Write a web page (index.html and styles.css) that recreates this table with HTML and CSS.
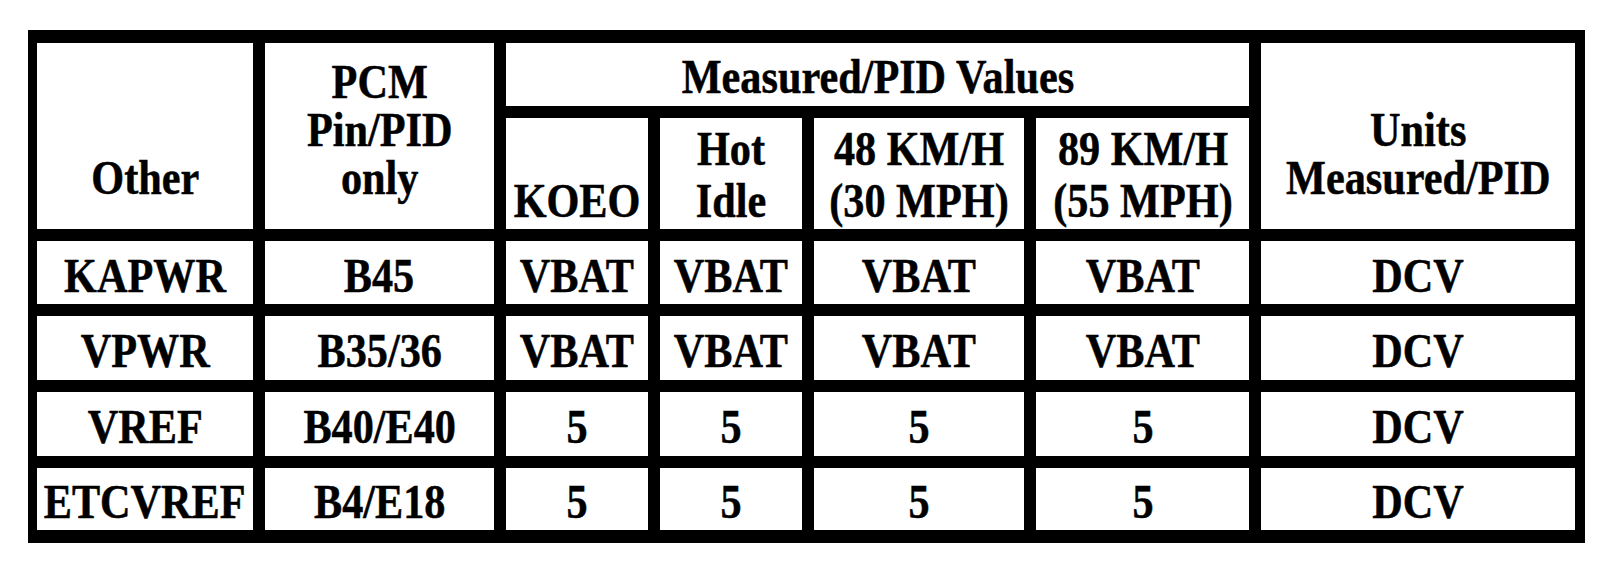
FILE: index.html
```html
<!DOCTYPE html>
<html lang="en">
<head>
<meta charset="utf-8">
<title>PCM Measured/PID Values</title>
<link rel="stylesheet" href="styles.css">
</head>
<body>
<div class="page">
  <div class="grid">
    <div class="cell hd hd-other"><span class="t">Other</span></div>
    <div class="cell hd hd-pcm"><span class="t">PCM<br>Pin/PID<br>only</span></div>
    <div class="cell hd-group"><span class="t">Measured/PID Values</span></div>
    <div class="cell hd hd-units"><span class="t">Units<br>Measured/PID</span></div>
    <div class="cell sub"><span class="t">KOEO</span></div>
    <div class="cell sub"><span class="t">Hot<br>Idle</span></div>
    <div class="cell sub"><span class="t">48 KM/H<br>(30 MPH)</span></div>
    <div class="cell sub"><span class="t">89 KM/H<br>(55 MPH)</span></div>

    <div class="cell row"><span class="t">KAPWR</span></div>
    <div class="cell row"><span class="t">B45</span></div>
    <div class="cell row"><span class="t">VBAT</span></div>
    <div class="cell row"><span class="t">VBAT</span></div>
    <div class="cell row"><span class="t">VBAT</span></div>
    <div class="cell row"><span class="t">VBAT</span></div>
    <div class="cell row"><span class="t">DCV</span></div>

    <div class="cell row"><span class="t">VPWR</span></div>
    <div class="cell row"><span class="t">B35/36</span></div>
    <div class="cell row"><span class="t">VBAT</span></div>
    <div class="cell row"><span class="t">VBAT</span></div>
    <div class="cell row"><span class="t">VBAT</span></div>
    <div class="cell row"><span class="t">VBAT</span></div>
    <div class="cell row"><span class="t">DCV</span></div>

    <div class="cell row"><span class="t">VREF</span></div>
    <div class="cell row"><span class="t">B40/E40</span></div>
    <div class="cell row"><span class="t">5</span></div>
    <div class="cell row"><span class="t">5</span></div>
    <div class="cell row"><span class="t">5</span></div>
    <div class="cell row"><span class="t">5</span></div>
    <div class="cell row"><span class="t">DCV</span></div>

    <div class="cell row"><span class="t">ETCVREF</span></div>
    <div class="cell row"><span class="t">B4/E18</span></div>
    <div class="cell row"><span class="t">5</span></div>
    <div class="cell row"><span class="t">5</span></div>
    <div class="cell row"><span class="t">5</span></div>
    <div class="cell row"><span class="t">5</span></div>
    <div class="cell row"><span class="t">DCV</span></div>
  </div>
</div>
</body>
</html>
```
FILE: styles.css
```css
html, body {
  margin: 0;
  padding: 0;
  background: #fff;
}

.page {
  padding: 30px 0 0 28px;
}

.grid {
  display: grid;
  width: fit-content;
  background: #000;
  padding: 13px 10px 13px 9px;
  column-gap: 12px;
  row-gap: 12px;
  grid-template-columns: 216px 229px 142px 142px 210px 213px 314px;
  grid-template-rows: 63px 111px 63px 64px 64px 62px;
  font-family: "Liberation Serif", "Times New Roman", serif;
  font-weight: bold;
  font-size: 48px;
  color: #000;
}

.cell {
  background: #fff;
  display: flex;
  flex-direction: column;
  align-items: center;
  justify-content: center;
  min-width: 0;
}

.t {
  display: inline-block;
  white-space: nowrap;
  text-align: center;
  line-height: 48px;
  transform: scaleX(0.88);
  -webkit-text-stroke: 0.5px #000;
}

.hd {
  grid-row: 1 / 3;
  justify-content: flex-end;
  padding-bottom: 27px;
}

.hd-other { grid-column: 1; }
.hd-pcm { grid-column: 2; }
.hd-units { grid-column: 7; }

.hd-group {
  grid-column: 3 / 7;
  grid-row: 1;
  padding-top: 5px;
}

.sub {
  grid-row: 2;
  justify-content: flex-end;
  padding-bottom: 2px;
}

.sub .t {
  line-height: 52px;
}

.row {
  padding-top: 6px;
}
```
